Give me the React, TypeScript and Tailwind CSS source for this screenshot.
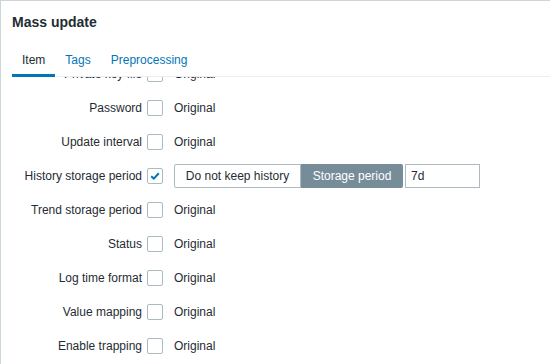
import React from "react";

const rows: { label: string; checked?: boolean }[] = [
  { label: "Private key file" },
  { label: "Password" },
  { label: "Update interval" },
  { label: "History storage period", checked: true },
  { label: "Trend storage period" },
  { label: "Status" },
  { label: "Log time format" },
  { label: "Value mapping" },
  { label: "Enable trapping" },
];

function Checkbox({ checked }: { checked?: boolean }) {
  return (
    <div className="w-[16px] h-[16px] border border-[#acbbc2] rounded-[2px] bg-white flex items-center justify-center shrink-0">
      {checked && (
        <svg width="12" height="12" viewBox="0 0 12 12">
          <path d="M2.2 6.2 L4.8 8.6 L9.8 3.2" fill="none" stroke="#0275b8" strokeWidth="2" />
        </svg>
      )}
    </div>
  );
}

export default function App() {
  return (
    <div
      className="w-[550px] h-[364px] bg-white border-l border-t border-[#ccd5d9] overflow-hidden text-[12px] text-[#1f2c33]"
      style={{ fontFamily: '"Liberation Sans", Arial, sans-serif' }}
    >
      <div className="h-[45px] pl-[11px] pt-[13px]">
        <div className="text-[14px] leading-[16px] font-bold text-[#1f2c33]">Mass update</div>
      </div>
      <div className="ml-[11px] flex border-b border-[#ebeef0] h-[31px]">
        <div className="h-[31px] -mb-px px-[10px] flex items-center border-b-[3px] border-[#0275b8] text-[#1f2c33]">
          Item
        </div>
        <div className="h-[30px] px-[10px] flex items-center text-[#0275b8] pb-[3px]">Tags</div>
        <div className="h-[30px] px-[10px] flex items-center text-[#0275b8] pb-[3px]">Preprocessing</div>
      </div>
      <div className="h-[288px] overflow-hidden">
        <div className="-mt-[20px]">
          {rows.map((r) => (
            <div key={r.label} className="h-[34px] flex items-center">
              <div className="w-[141px] text-right whitespace-nowrap">{r.label}</div>
              <div className="ml-[5px]">
                <Checkbox checked={r.checked} />
              </div>
              {r.checked ? (
                <div className="ml-[11px] flex items-center">
                  <div className="flex h-[24px]">
                    <div className="h-[24px] w-[127px] border border-[#acbbc2] bg-white flex items-center justify-center rounded-l-[2px]">
                      Do not keep history
                    </div>
                    <div className="h-[24px] w-[102px] bg-[#768d99] text-white flex items-center justify-center rounded-r-[2px]">
                      Storage period
                    </div>
                  </div>
                  <div className="ml-[2px] h-[24px] w-[75px] border border-[#acbbc2] bg-white flex items-center pl-[5px]">
                    7d
                  </div>
                </div>
              ) : (
                <div className="ml-[11px]">Original</div>
              )}
            </div>
          ))}
        </div>
      </div>
    </div>
  );
}
